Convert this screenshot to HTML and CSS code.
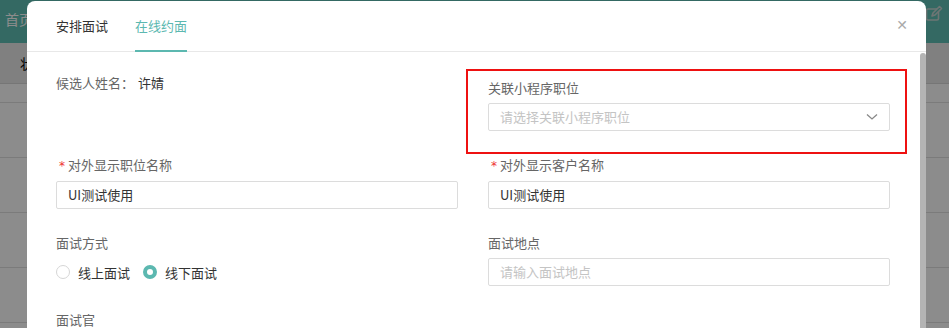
FILE: index.html
```html
<!DOCTYPE html>
<html>
<head>
  <title>在线约面</title>
  <link rel="stylesheet" href="styles.css">
</head>
<body>
  <div class="page">
    <div class="topbar">
      <span class="home">首页</span>
      <svg class="edit" width="18" height="18" viewBox="0 0 18 18">
        <rect x="1.5" y="4" width="12" height="11" rx="1.5" fill="none" stroke="#c9d6d3" stroke-width="1.6"/>
        <path d="M7 11 L8 8 L14.5 1.5 L16.5 3.5 L10 10 Z" fill="#5fc0b5" stroke="#c9d6d3" stroke-width="1.6" stroke-linejoin="round"/>
      </svg>
    </div>
    <div class="subbar"><span class="sub-text">状</span></div>
    <div class="row short"></div>
    <div class="row"></div>
    <div class="row"></div>
    <div class="row"></div>
    <div class="row"></div>
  </div>
  <div class="mask"></div>

  <div class="modal">
    <div class="modal-head">
      <div class="tab">安排面试</div>
      <div class="tab active">在线约面</div>
      <span class="close">&#x2715;</span>
    </div>
    <div class="modal-body">
      <div class="info">
        <span class="info-label">候选人姓名：</span>
        <span class="info-value">许婧</span>
      </div>
      <div class="field first">
        <div class="highlight"></div>
        <div class="label">关联小程序职位</div>
        <div class="input select">
          <span class="placeholder">请选择关联小程序职位</span>
          <svg width="12" height="8" viewBox="0 0 12 8">
            <path d="M1 1.5 L6 6 L11 1.5" fill="none" stroke="#888" stroke-width="1.3"/>
          </svg>
        </div>
      </div>

      <div class="field">
        <div class="label"><span class="star">*</span>对外显示职位名称</div>
        <div class="input">UI测试使用</div>
      </div>
      <div class="field">
        <div class="label"><span class="star">*</span>对外显示客户名称</div>
        <div class="input">UI测试使用</div>
      </div>

      <div class="field">
        <div class="label">面试方式</div>
        <div class="radios">
          <label class="radio"><span class="dot"></span>线上面试</label>
          <label class="radio checked"><span class="dot"></span>线下面试</label>
        </div>
      </div>
      <div class="field">
        <div class="label">面试地点</div>
        <div class="input"><span class="placeholder">请输入面试地点</span></div>
      </div>

      <div class="field">
        <div class="label">面试官</div>
      </div>
    </div>
    <div class="scroll-thumb"></div>
  </div>
</body>
</html>
```

FILE: styles.css
```css
body {
  margin: 0;
  width: 949px;
  height: 328px;
  overflow: hidden;
  font-family: "Noto Sans CJK SC", "Noto Sans", sans-serif;
  font-size: 13px;
  position: relative;
  background: #fff;
}

.topbar {
  height: 43px;
  background: #5fc0b5;
  display: flex;
  align-items: center;
  justify-content: space-between;
  padding: 0 6px 0 5px;
}

.home {
  color: #fff;
  font-size: 14px;
  margin-top: -6px;
}

.edit {
  margin-top: -16px;
}

.subbar {
  height: 40px;
  background: #e9e9e9;
  border-bottom: 1px solid #d8d8d8;
  padding-left: 20px;
  line-height: 40px;
  font-size: 14px;
}

.row {
  height: 54px;
  border-bottom: 1px solid #e0e0e0;
  background: #fff;
}

.row.short {
  height: 18px;
}

.mask {
  position: absolute;
  inset: 0;
  background: rgba(0, 0, 0, 0.45);
}

.modal {
  position: absolute;
  left: 27px;
  top: 1px;
  width: 899px;
  height: 400px;
  background: #fff;
  border-radius: 8px;
}

.modal-head {
  height: 50px;
  border-bottom: 1px solid #e8e8e8;
  display: flex;
  gap: 27px;
  padding-left: 29px;
  position: relative;
}

.tab {
  line-height: 50px;
  color: #333;
  box-sizing: border-box;
  height: 51px;
}

.tab.active {
  color: #5cb8b0;
  border-bottom: 2px solid #5cb8b0;
}

.close {
  position: absolute;
  right: 18px;
  top: 16px;
  color: #aaa;
  font-size: 14px;
  font-family: "DejaVu Sans", sans-serif;
}

.modal-body {
  display: grid;
  grid-template-columns: 402px 402px;
  column-gap: 30px;
  row-gap: 24px;
  padding: 21px 0 0 29px;
}

.info {
  line-height: 20px;
  color: #666;
}

.info-value {
  margin-left: 1px;
  color: #333;
}

.field {
  position: relative;
}

.field.first {
  margin-top: 5px;
}

.highlight {
  position: absolute;
  left: -22px;
  right: -17px;
  top: -9px;
  bottom: -23px;
  border: 2px solid #ee1111;
}

.label {
  line-height: 20px;
  color: #666;
  margin-bottom: 5px;
}

.star {
  color: #e33;
  margin: 0 3px 0 3px;
  font-family: "DejaVu Sans", sans-serif;
  font-size: 12px;
}

.input {
  height: 28px;
  box-sizing: border-box;
  border: 1px solid #dcdcdc;
  border-radius: 2px;
  padding: 0 11px;
  line-height: 26px;
  color: #333;
}

.select {
  display: flex;
  justify-content: space-between;
  align-items: center;
}

.placeholder {
  color: #c4c4c4;
}

.radios {
  display: flex;
  gap: 13px;
  height: 28px;
  align-items: center;
}

.radio {
  display: flex;
  align-items: center;
  gap: 8px;
  color: #333;
}

.dot {
  width: 12px;
  height: 12px;
  border: 1px solid #d6d6d6;
  border-radius: 50%;
}

.radio.checked .dot {
  width: 6px;
  height: 6px;
  border: 4px solid #5cb8b0;
  background: #fff;
}

.scroll-thumb {
  position: absolute;
  right: 0;
  top: 52px;
  width: 6px;
  height: 400px;
  background: #b4b4b4;
  border-radius: 3px 3px 0 0;
}
```
